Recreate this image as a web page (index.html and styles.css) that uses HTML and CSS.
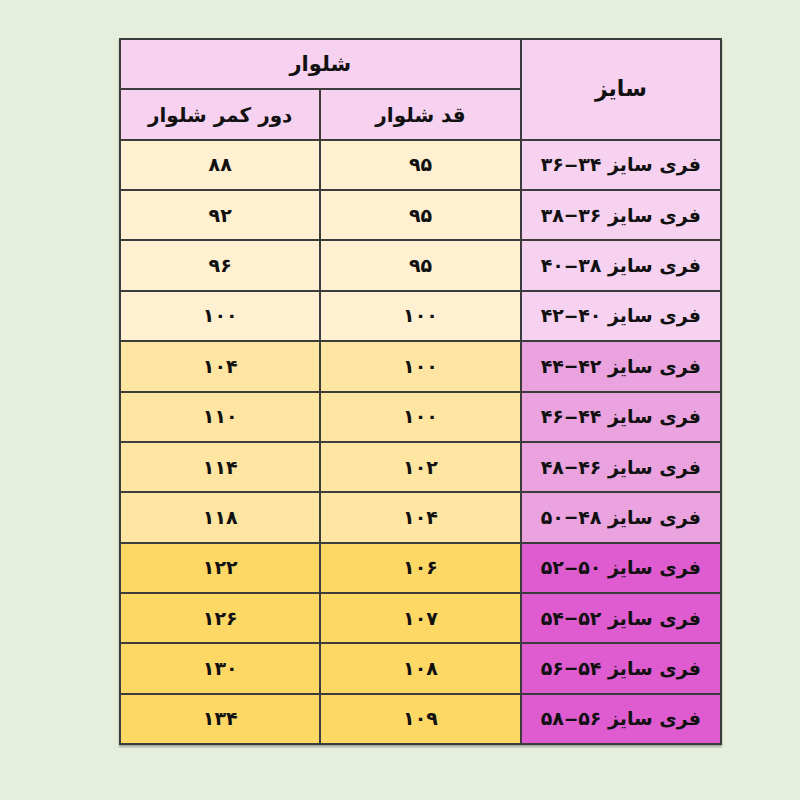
FILE: index.html
```html
<!DOCTYPE html>
<html lang="fa" dir="rtl">
<head>
<meta charset="utf-8">
<link rel="stylesheet" href="styles.css">
</head>
<body>
<div class="page">
  <div class="size-grid">
    <div class="cell head h-size">سایز</div>
    <div class="cell head h-top">شلوار</div>
    <div class="cell head">قد شلوار</div>
    <div class="cell head">دور کمر شلوار</div>

    <div class="cell sz g1">فری سایز ۳۴<span class="dash">–</span>۳۶</div><div class="cell v g1">۹۵</div><div class="cell v g1">۸۸</div>
    <div class="cell sz g1">فری سایز ۳۶<span class="dash">–</span>۳۸</div><div class="cell v g1">۹۵</div><div class="cell v g1">۹۲</div>
    <div class="cell sz g1">فری سایز ۳۸<span class="dash">–</span>۴۰</div><div class="cell v g1">۹۵</div><div class="cell v g1">۹۶</div>
    <div class="cell sz g1">فری سایز ۴۰<span class="dash">–</span>۴۲</div><div class="cell v g1">۱۰۰</div><div class="cell v g1">۱۰۰</div>

    <div class="cell sz g2">فری سایز ۴۲<span class="dash">–</span>۴۴</div><div class="cell v g2">۱۰۰</div><div class="cell v g2">۱۰۴</div>
    <div class="cell sz g2">فری سایز ۴۴<span class="dash">–</span>۴۶</div><div class="cell v g2">۱۰۰</div><div class="cell v g2">۱۱۰</div>
    <div class="cell sz g2">فری سایز ۴۶<span class="dash">–</span>۴۸</div><div class="cell v g2">۱۰۲</div><div class="cell v g2">۱۱۴</div>
    <div class="cell sz g2">فری سایز ۴۸<span class="dash">–</span>۵۰</div><div class="cell v g2">۱۰۴</div><div class="cell v g2">۱۱۸</div>

    <div class="cell sz g3">فری سایز ۵۰<span class="dash">–</span>۵۲</div><div class="cell v g3">۱۰۶</div><div class="cell v g3">۱۲۲</div>
    <div class="cell sz g3">فری سایز ۵۲<span class="dash">–</span>۵۴</div><div class="cell v g3">۱۰۷</div><div class="cell v g3">۱۲۶</div>
    <div class="cell sz g3">فری سایز ۵۴<span class="dash">–</span>۵۶</div><div class="cell v g3">۱۰۸</div><div class="cell v g3">۱۳۰</div>
    <div class="cell sz g3">فری سایز ۵۶<span class="dash">–</span>۵۸</div><div class="cell v g3">۱۰۹</div><div class="cell v g3">۱۳۴</div>
  </div>
</div>
</body>
</html>
```

FILE: styles.css
```css
html, body {
  margin: 0;
  padding: 0;
  background: #e5efdb;
}
.page {
  width: 800px;
  height: 800px;
  padding: 38px 78px 0 0;
  box-sizing: border-box;
  display: flex;
  justify-content: flex-start;
  align-items: flex-start;
}
.size-grid {
  width: 603px;
  height: 707px;
  box-sizing: border-box;
  display: grid;
  grid-template-columns: 1fr 1fr 1fr;
  grid-template-rows: repeat(14, 1fr);
  gap: 2px;
  padding: 2px;
  background: #3c3c3c;
  box-shadow: 0 2px 2px rgba(0,0,0,0.3);
  font-family: "DejaVu Sans", sans-serif;
  font-weight: bold;
  color: #111;
}
.cell {
  display: flex;
  align-items: center;
  justify-content: center;
  line-height: 1;
  font-size: 19px;
  white-space: nowrap;
}
.dash {
  font-family: "Liberation Sans", sans-serif;
  font-size: 22px;
  margin: 0 1px;
}
.head {
  background: #f6d2f0;
  font-size: 20px;
}
.h-size {
  grid-row: span 2;
  font-size: 22px;
}
.h-top {
  grid-column: span 2;
  font-size: 21px;
}
.g1 { background: #fef0d1; }
.g1.sz { background: #f6d2f0; }
.g2 { background: #fee5a1; }
.g2.sz { background: #eba3df; }
.g3 { background: #fed865; }
.g3.sz { background: #de5ccf; }
```
